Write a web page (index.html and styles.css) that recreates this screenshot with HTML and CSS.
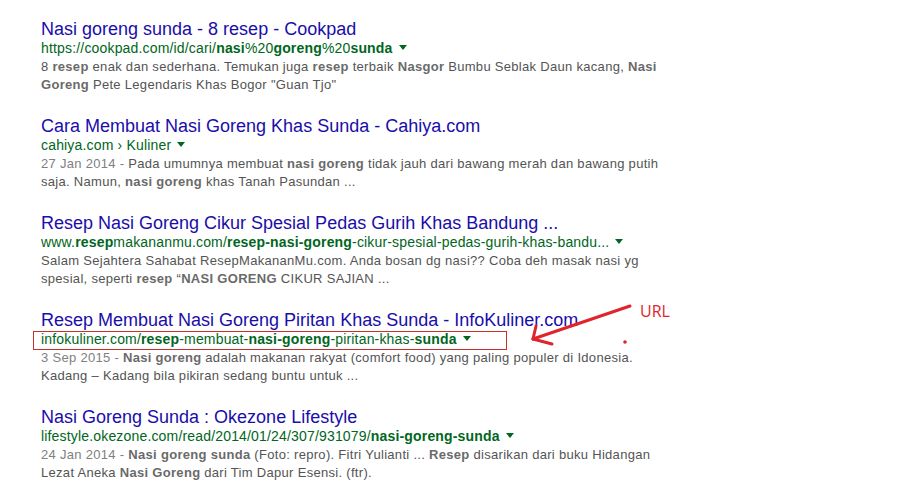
FILE: index.html
```html
<!DOCTYPE html>
<html lang="en">
<head>
    <meta charset="UTF-8" />
    <title>nasi goreng sunda - Google Search</title>
    <link rel="stylesheet" href="styles.css">
</head>
<body>
    <div class="results">
        <div class="result">
            <h3 class="title">Nasi goreng sunda - 8 resep - Cookpad</h3>
            <div class="url">https://cookpad.com/id/cari/<b>nasi</b>%20<b>goreng</b>%20<b>sunda</b><span class="drop"></span></div>
            <p class="snippet">8 <b>resep</b> enak dan sederhana. Temukan juga <b>resep</b> terbaik <b>Nasgor</b> Bumbu Seblak Daun kacang, <b>Nasi</b><br><b>Goreng</b> Pete Legendaris Khas Bogor "Guan Tjo"</p>
        </div>

        <div class="result">
            <h3 class="title">Cara Membuat Nasi Goreng Khas Sunda - Cahiya.com</h3>
            <div class="url">cahiya.com › Kuliner<span class="drop"></span></div>
            <p class="snippet"><span class="date">27 Jan 2014 - </span>Pada umumnya membuat <b>nasi goreng</b> tidak jauh dari bawang merah dan bawang putih<br>saja. Namun, <b>nasi goreng</b> khas Tanah Pasundan ...</p>
        </div>

        <div class="result">
            <h3 class="title">Resep Nasi Goreng Cikur Spesial Pedas Gurih Khas Bandung ...</h3>
            <div class="url">www.<b>resep</b>makananmu.com/<b>resep-nasi-goreng</b>-cikur-spesial-pedas-gurih-khas-bandu...<span class="drop"></span></div>
            <p class="snippet">Salam Sejahtera Sahabat ResepMakananMu.com. Anda bosan dg nasi?? Coba deh masak nasi yg<br>spesial, seperti <b>resep</b> “<b>NASI GORENG</b> CIKUR SAJIAN ...</p>
        </div>

        <div class="result">
            <h3 class="title">Resep Membuat Nasi Goreng Piritan Khas Sunda - InfoKuliner.com</h3>
            <div class="url">infokuliner.com/<b>resep</b>-membuat-<b>nasi-goreng</b>-piritan-khas-<b>sunda</b><span class="drop"></span></div>
            <p class="snippet"><span class="date">3 Sep 2015 - </span><b>Nasi goreng</b> adalah makanan rakyat (comfort food) yang paling populer di Idonesia.<br>Kadang – Kadang bila pikiran sedang buntu untuk ...</p>
        </div>

        <div class="result">
            <h3 class="title">Nasi Goreng Sunda : Okezone Lifestyle</h3>
            <div class="url">lifestyle.okezone.com/read/2014/01/24/307/931079/<b>nasi-goreng-sunda</b><span class="drop"></span></div>
            <p class="snippet"><span class="date">24 Jan 2014 - </span><b>Nasi goreng sunda</b> (Foto: repro). Fitri Yulianti ... <b>Resep</b> disarikan dari buku Hidangan<br>Lezat Aneka <b>Nasi Goreng</b> dari Tim Dapur Esensi. (ftr).</p>
        </div>
    </div>

    <!-- hand-drawn annotation -->
    <svg class="annotation" width="917" height="491" viewBox="0 0 917 491">
        <rect x="33.5" y="331.5" width="473" height="18" fill="none" stroke="#c9302c" stroke-width="1"/>
        <g stroke="#e0242c" stroke-width="3" stroke-linecap="round" fill="none">
            <path d="M630 306 L533 339"/>
            <path d="M533 339 L536 326"/>
            <path d="M533 339 L552 344"/>
        </g>
        <circle cx="625" cy="342" r="1.8" fill="#e0242c"/>
        <text x="640" y="317" class="url-label">URL</text>
    </svg>
</body>
</html>
```

FILE: styles.css
```css
* {
    margin: 0;
    padding: 0;
    box-sizing: border-box;
}

body {
    background: #ffffff;
    font-family: 'Liberation Sans', Arial, sans-serif;
    position: relative;
    width: 917px;
    height: 491px;
    overflow: hidden;
}

.results {
    padding: 18px 0 0 41px;
}

.result {
    width: 660px;
    margin-bottom: 21px;
}

.title {
    font-size: 18px;
    font-weight: normal;
    line-height: 22px;
    color: #1a0dab;
    white-space: nowrap;
}

.url {
    font-size: 14px;
    line-height: 16px;
    letter-spacing: 0.17px;
    color: #006621;
    white-space: nowrap;
}

.url b {
    font-weight: bold;
}

.drop {
    display: inline-block;
    margin-left: 6px;
    vertical-align: middle;
    border-top: 5px solid #006621;
    border-left: 4px solid transparent;
    border-right: 4px solid transparent;
    margin-top: -3px;
}

.snippet {
    margin-top: 2px;
    font-size: 13px;
    line-height: 18px;
    letter-spacing: 0.3px;
    color: #545454;
    white-space: nowrap;
}

.snippet b {
    color: #6a6a6a;
}

.date {
    color: #808080;
}

/* annotation layer over the results */
.annotation {
    position: absolute;
    left: 0;
    top: 0;
    pointer-events: none;
}

.url-label {
    font-family: 'Open Sans', 'Liberation Sans', sans-serif;
    font-size: 16px;
    fill: #e0242c;
}
```
